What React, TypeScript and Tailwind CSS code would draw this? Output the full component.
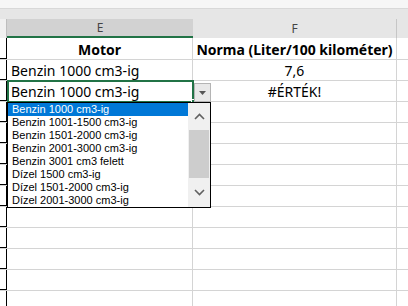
import { ReactNode } from "react";

const options = [
    "Benzin 1000 cm3-ig",
    "Benzin 1001-1500 cm3-ig",
    "Benzin 1501-2000 cm3-ig",
    "Benzin 2001-3000 cm3-ig",
    "Benzin 3001 cm3 felett",
    "Dízel 1500 cm3-ig",
    "Dízel 1501-2000 cm3-ig",
    "Dízel 2001-3000 cm3-ig",
];

function Row({ e, f, bold, h = "h-[21px]" }: { e?: ReactNode; f?: ReactNode; bold?: boolean; h?: string }) {
    return (
        <div className={`flex ${h} border-b border-[#d4d4d4]`}>
            <div className="w-[7px] shrink-0 border-r border-black" />
            <div className={`w-[186px] shrink-0 border-r border-[#d4d4d4] flex items-end ${bold ? "justify-center font-bold" : "pl-[4px]"}`}>
                {e}
            </div>
            <div className={`w-[204px] shrink-0 border-r border-[#d4d4d4] flex items-end justify-center ${bold ? "font-bold" : ""}`}>
                {f}
            </div>
            <div className="flex-1" />
        </div>
    );
}

export default function App() {
    return (
        <div className="relative w-[408px] h-[306px] overflow-hidden bg-white text-black text-[14px] leading-[18px]" style={{ fontFamily: '"Noto Sans", "Open Sans", sans-serif' }}>
            {/* top strip */}
            <div className="h-[9px] bg-[#f6f6f6] border-b border-[#d8d8d8]" />
            <div className="h-[10px] bg-[#e6e6e6]" />

            {/* column headers */}
            <div className="flex h-[19px] bg-[#e6e6e6] text-[12px] text-[#444]">
                <div className="w-[7px] shrink-0 bg-[#f0f0f0] border-r border-[#bdbdbd]" />
                <div className="w-[186px] shrink-0 bg-[#d2d2d2] border-b-2 border-[#217346] flex items-center justify-center">E</div>
                <div className="w-[204px] shrink-0 border-r border-[#c6c6c6] flex items-center justify-center">F</div>
                <div className="flex-1" />
            </div>

            <Row e="Motor" f="Norma (Liter/100 kilométer)" bold h="h-[22px]" />
            <Row e="Benzin 1000 cm3-ig" f="7,6" />
            <Row e="Benzin 1000 cm3-ig" f="#ÉRTÉK!" />
            {Array.from({ length: 10 }).map((_, i) => (
                <Row key={i} />
            ))}

            {/* row header ticks */}
            <div className="absolute left-0 top-[38px] w-[7px] flex flex-col">
                {Array.from({ length: 13 }).map((_, i) => (
                    <div key={i} className="h-[21px] border-b border-black" />
                ))}
            </div>

            {/* active cell */}
            <div className="absolute left-[7px] top-[80px] w-[187px] h-[23px] border-2 border-[#217346]" />
            <div className="absolute left-[191px] top-[99px] w-[5px] h-[5px] bg-[#217346] border border-white" />

            {/* dropdown button */}
            <div className="absolute left-[194px] top-[83px] w-[17px] h-[19px] bg-[#e8e8e8] border border-[#b4b4b4] flex items-center justify-center">
                <svg width="7" height="4" viewBox="0 0 7 4">
                    <path d="M0 0 H7 L3.5 4 Z" fill="#555" />
                </svg>
            </div>

            {/* dropdown list */}
            <div className="absolute left-[7px] top-[102px] w-[204px] h-[106px] bg-white border border-black flex text-[11px] leading-[13px]" style={{ fontFamily: '"Liberation Sans", Arial, sans-serif' }}>
                <div className="w-[180px] flex flex-col">
                    {options.map((o, i) => (
                        <div key={o} className={`h-[13px] pl-[4px] whitespace-nowrap ${i === 0 ? "bg-[#0078d7] text-white" : "text-black"}`}>
                            {o}
                        </div>
                    ))}
                </div>
                <div className="flex-1 bg-[#f0f0f0] flex flex-col items-center">
                    <div className="h-[27px] flex items-center justify-center">
                        <svg width="11" height="7" viewBox="0 0 11 7">
                            <path d="M1 6 L5.5 1.5 L10 6" fill="none" stroke="#606060" strokeWidth="1.6" />
                        </svg>
                    </div>
                    <div className="w-[20px] h-[48px] bg-[#cdcdcd]" />
                    <div className="flex-1 flex items-center justify-center">
                        <svg width="11" height="7" viewBox="0 0 11 7">
                            <path d="M1 1 L5.5 5.5 L10 1" fill="none" stroke="#606060" strokeWidth="1.6" />
                        </svg>
                    </div>
                </div>
            </div>
        </div>
    );
}
